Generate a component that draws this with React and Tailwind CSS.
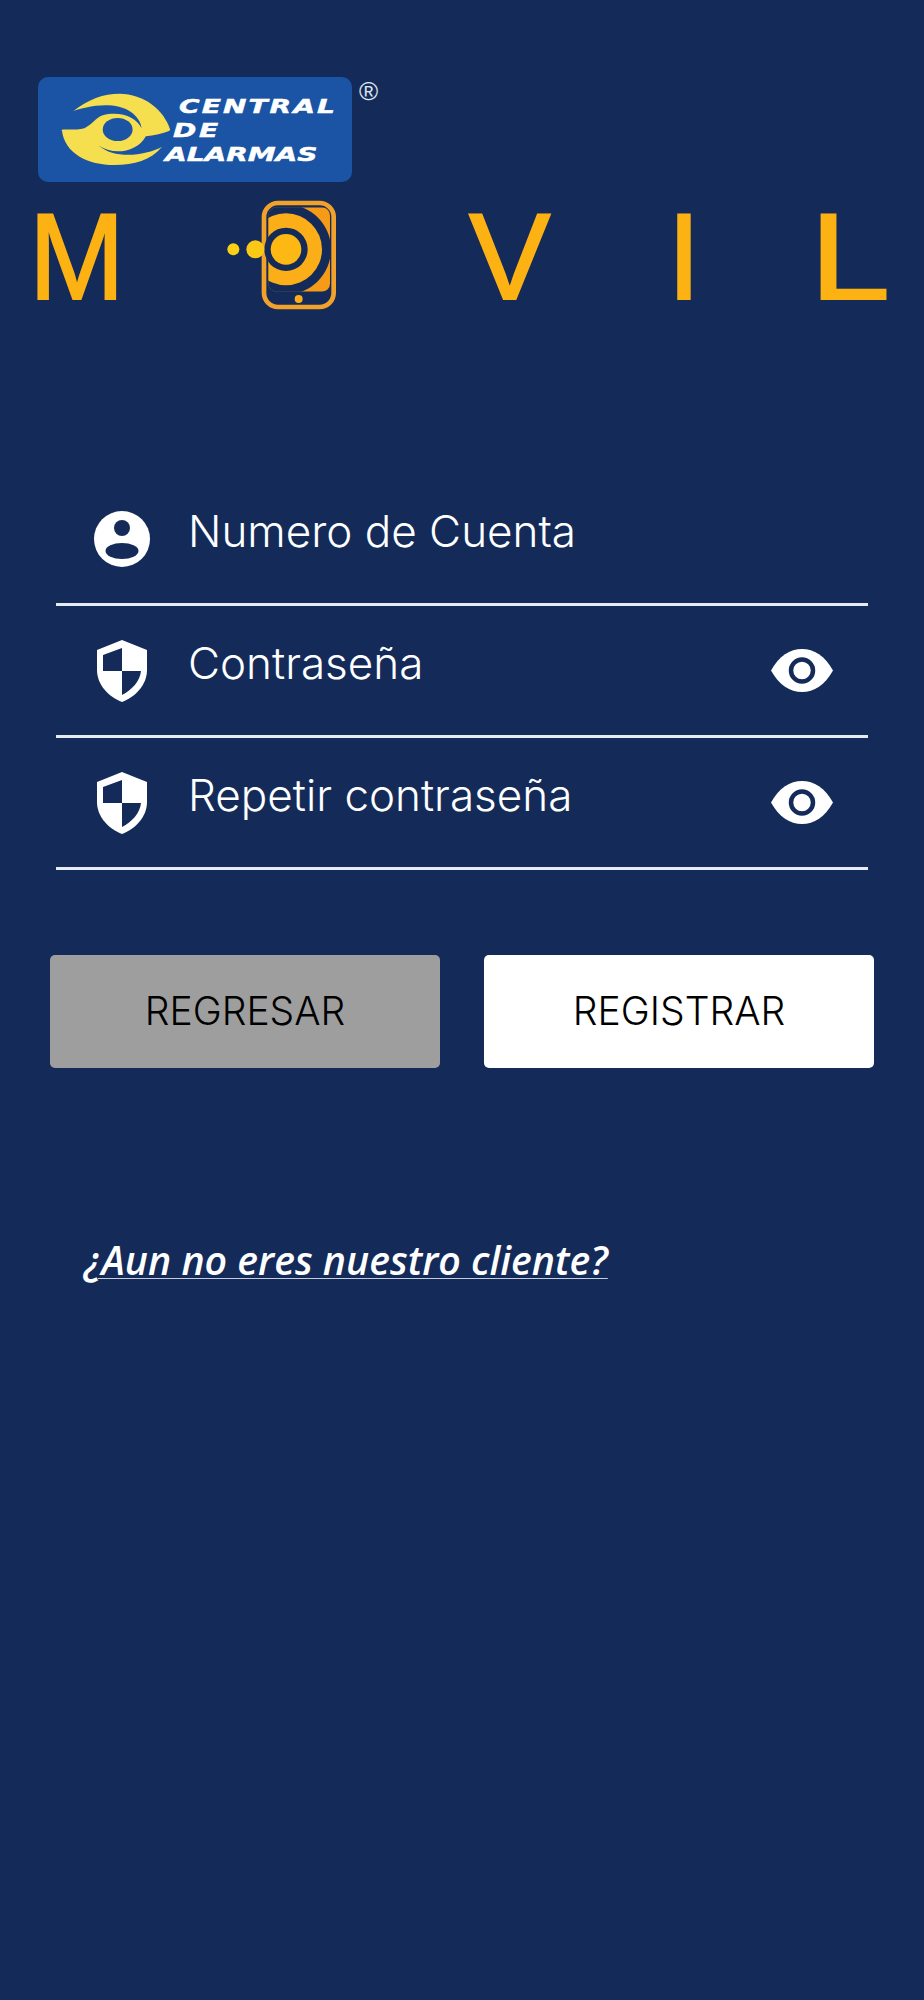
function BrandMark() {
  return (
    <svg viewBox="90 68 330 220" className="w-[110px] h-[73px] shrink-0">
      <path d="M120 128C170 85 220 70 265 70C340 70 400 120 418 178L392 232C360 270 310 285 250 285C170 285 100 250 92 180Z" fill="#f6df4f" />
      <path d="M112 128C170 105 250 92 300 125C320 140 330 155 332 174C315 140 270 122 215 135C195 142 180 165 160 174C135 180 110 178 85 178Z" fill="#1b54a4" />
      <ellipse cx="260" cy="178" rx="45" ry="35" fill="#1b54a4" />
      <path d="M203 226C245 256 318 248 345 198C370 195 400 190 425 178L430 235L395 230C340 258 250 268 203 226Z" fill="#1b54a4" />
    </svg>
  );
}

function PhoneMark() {
  return (
    <svg viewBox="0 0 420 390" className="w-[140px] h-[130px] shrink-0">
      <defs>
        <clipPath id="screen">
          <rect x="175" y="52" width="185" height="253" rx="24" />
        </clipPath>
      </defs>
      <rect x="162" y="39" width="209" height="312" rx="42" fill="none" stroke="#f2a22a" strokeWidth="14" />
      <g clipPath="url(#screen)">
        <rect x="175" y="52" width="185" height="253" fill="#f59b18" />
        <circle cx="228" cy="178" r="135" fill="#142b5a" />
        <circle cx="228" cy="178" r="108" fill="#fbae17" />
      </g>
      <circle cx="228" cy="178" r="65" fill="#142b5a" />
      <circle cx="228" cy="178" r="46" fill="#fdb813" />
      <circle cx="136" cy="178" r="27" fill="#fbc915" />
      <circle cx="70" cy="178" r="18" fill="#fbd015" />
      <circle cx="266" cy="327" r="12" fill="#fbae17" />
    </svg>
  );
}

function UserIcon() {
  return (
    <svg viewBox="0 0 56 56" className="w-[56px] h-[56px]">
      <circle cx="28" cy="28" r="28" fill="#fff" />
      <circle cx="28" cy="17" r="8" fill="#142b5a" />
      <ellipse cx="28" cy="40" rx="16.5" ry="8" fill="#142b5a" />
    </svg>
  );
}

function ShieldIcon() {
  return (
    <svg viewBox="0 0 50 62" className="w-[50px] h-[62px]">
      <path d="M25 0L50 10V30C50 45 38 57 25 62C12 57 0 45 0 30V10Z" fill="#fff" />
      <path d="M25 8V31H6V15ZM25 31H44C43 41 35 50 25 55Z" fill="#142b5a" />
    </svg>
  );
}

function EyeIcon() {
  return (
    <svg viewBox="0 0 62 43" className="w-[62px] h-[43px]">
      <path d="M0 21.5C8 7 19 0 31 0C43 0 54 7 62 21.5C54 36 43 43 31 43C19 43 8 36 0 21.5Z" fill="#fff" />
      <circle cx="31" cy="21.5" r="11" fill="#fff" stroke="#142b5a" strokeWidth="4.5" />
    </svg>
  );
}

function Field({ icon, label, eye }) {
  return (
    <div className="h-[132px] border-b-[3px] border-[#e6ebf3] flex items-center justify-between pr-[35px]">
      <div className="flex items-center">
        <div className="w-[132px] flex justify-center">{icon}</div>
        <span className="text-[44px] leading-none font-light text-white -mt-[16px]">{label}</span>
      </div>
      {eye && <EyeIcon />}
    </div>
  );
}

export default function App() {
  return (
    <div className="min-h-[2000px] w-[924px] bg-[#142b5a] font-['Inter',sans-serif] overflow-hidden">
      {/* logo */}
      <div className="flex items-start pt-[77px] pl-[38px]">
        <div className="w-[314px] h-[105px] rounded-[10px] bg-[#1b54a4] flex items-center pl-[23px]">
          <BrandMark />
          <div className="font-['DejaVu_Sans',sans-serif] font-bold italic text-white text-[20px] leading-[24px] [-webkit-text-stroke:0.5px_white]">
            <div className="ml-[8px] tracking-[1.5px] scale-x-[1.4] origin-left">CENTRAL</div>
            <div className="ml-[2px] tracking-[2px] scale-x-[1.4] origin-left">DE</div>
            <div className="-ml-[6px] scale-x-[1.4] origin-left">ALARMAS</div>
          </div>
        </div>
        <span className="ml-[7px] text-[26px] leading-[28px] text-[#dfe5ef] font-['Liberation_Sans',sans-serif]">®</span>
      </div>

      {/* MOVIL */}
      <div className="mt-[8px] h-[130px] flex items-center text-[#fdb213] text-[122px] leading-none pt-[4px] font-['Liberation_Sans',sans-serif] [-webkit-text-stroke:2px_#fdb213]">
        <span className="ml-[29px] w-[181px] scale-x-[0.94] origin-left">M</span>
        <div className="-mt-[4px]"><PhoneMark /></div>
        <span className="ml-[119px] w-[198px]">V</span>
        <span className="w-[143px]">I</span>
        <span className="scale-x-[1.18] origin-left">L</span>
      </div>

      {/* form */}
      <div className="mt-[154px] mx-[56px]">
        <Field icon={<UserIcon />} label="Numero de Cuenta" />
        <Field icon={<ShieldIcon />} label="Contraseña" eye />
        <Field icon={<ShieldIcon />} label="Repetir contraseña" eye />
      </div>

      {/* buttons */}
      <div className="mt-[85px] ml-[50px] w-[824px] grid grid-cols-2 gap-[44px]">
        <button className="h-[113px] rounded-[5px] bg-[#9e9e9e] text-black text-[39px] font-light">REGRESAR</button>
        <button className="h-[113px] rounded-[5px] bg-white text-black text-[39px] font-light">REGISTRAR</button>
      </div>

      <a className="block mt-[167px] ml-[84px] text-white text-[39.3px] leading-[50px] font-semibold italic underline decoration-1 decoration-[#c5cede] underline-offset-[3px] font-['Open_Sans',sans-serif]">
        ¿Aun no eres nuestro cliente?
      </a>
    </div>
  );
}
